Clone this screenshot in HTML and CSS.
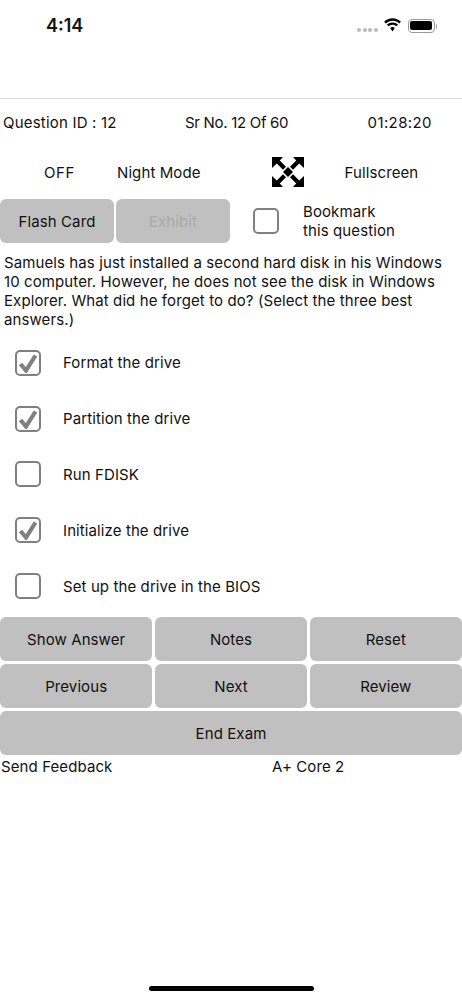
FILE: index.html
```html
<!DOCTYPE html>
<html lang="en">
<head>
  <meta charset="UTF-8" />
  <meta name="viewport" content="width=device-width, initial-scale=1.0" />
  <title>A+ Core 2 Exam</title>
  <link rel="stylesheet" href="styles.css">
</head>
<body>
  <div class="phone">
    <div class="status-bar">
      <span class="clock">4:14</span>
      <div class="status-icons">
        <div class="signal"><i></i><i></i><i></i><i></i></div>
        <svg class="wifi" width="19" height="14" viewBox="0 0 18 14">
          <path d="M9 2.800c2.600 0 5 1 6.700 2.700L17.400 3.800A11.800 11.800 0 0 0 9 .3 11.800 11.800 0 0 0 .6 3.800l1.700 1.700A9.600 9.600 0 0 1 9 2.800z"/>
          <path d="M9 6.800c1.500 0 2.900.6 3.900 1.500l1.700-1.700A8 8 0 0 0 9 4.400a8 8 0 0 0-5.600 2.200l1.700 1.700A5.800 5.800 0 0 1 9 6.800z"/>
          <path d="M9 9c-.9 0-1.700.3-2.300.9L9 13.500l2.300-3.600C10.700 9.300 9.900 9 9 9z"/>
        </svg>
        <div class="battery"><div class="battery-level"></div></div>
        <div class="battery-cap"></div>
      </div>
    </div>

    <div class="info-row">
      <span class="question-id">Question ID : 12</span>
      <span class="sr-no">Sr No. 12 Of 60</span>
      <span class="timer">01:28:20</span>
    </div>

    <div class="mode-row">
      <span class="mode-off">OFF</span>
      <span class="mode-label">Night Mode</span>
      <svg class="fullscreen" width="34" height="32" viewBox="0 0 34 32">
        <path d="M1 1h11L8.800 4.400 15 10.800 12 13.800 5.800 7.600 1 12z"/>
        <path d="M33 1H22L25.200 4.400 19 10.800 22 13.800 28.200 7.600 33 12z"/>
        <path d="M1 31h11L8.800 27.600 15 21.200 12 18.200 5.800 24.400 1 20z"/>
        <path d="M33 31H22L25.200 27.600 19 21.200 22 18.200 28.200 24.400 33 20z"/>
        <path d="M17 11l5 5-5 5-5-5z"/>
      </svg>
      <span class="mode-full">Fullscreen</span>
    </div>

    <div class="tools-row">
      <button class="btn tool-btn">Flash Card</button>
      <button class="btn tool-btn disabled">Exhibit</button>
      <span class="box bookmark-box"></span>
      <span class="bookmark-label">Bookmark<br>this question</span>
    </div>

    <p class="question">Samuels has just installed a second hard disk in his Windows 10 computer. However, he does not see the disk in Windows Explorer. What did he forget to do? (Select the three best answers.)</p>

    <ul class="options">
      <li><span class="box checked"><svg width="20" height="20" viewBox="0 0 20 20"><path d="M2.500 11l5.500 6.500L17.500 2.500"/></svg></span>Format the drive</li>
      <li><span class="box checked"><svg width="20" height="20" viewBox="0 0 20 20"><path d="M2.500 11l5.500 6.500L17.500 2.500"/></svg></span>Partition the drive</li>
      <li><span class="box"></span>Run FDISK</li>
      <li><span class="box checked"><svg width="20" height="20" viewBox="0 0 20 20"><path d="M2.500 11l5.500 6.500L17.500 2.500"/></svg></span>Initialize the drive</li>
      <li><span class="box"></span>Set up the drive in the BIOS</li>
    </ul>

    <div class="actions">
      <button class="btn">Show Answer</button>
      <button class="btn">Notes</button>
      <button class="btn">Reset</button>
      <button class="btn">Previous</button>
      <button class="btn">Next</button>
      <button class="btn">Review</button>
      <button class="btn end-exam">End Exam</button>
    </div>

    <div class="footer-row">
      <span class="feedback">Send Feedback</span>
      <span>A+ Core 2</span>
    </div>

    <div class="home-bar"></div>
  </div>
</body>
</html>
```

FILE: styles.css
```css
* {
  box-sizing: border-box;
}

body {
  margin: 0;
  font-family: 'Inter', sans-serif;
  background-color: #fff;
  color: #111;
  font-size: 15px;
  letter-spacing: 0.1px;
}

.phone {
  width: 462px;
  height: 1000px;
  display: flex;
  flex-direction: column;
  overflow: hidden;
}

.status-bar {
  height: 99px;
  border-bottom: 1px solid #dcdcdc;
  padding: 14px 25px 0 46px;
  display: flex;
  justify-content: space-between;
  align-items: flex-start;
}

.clock {
  font-size: 18px;
  font-weight: 600;
  line-height: 24px;
  letter-spacing: 0;
}

.status-icons {
  display: flex;
  align-items: center;
  height: 24px;
}

.signal {
  display: flex;
  gap: 1.500px;
  margin-right: 5px;
  margin-top: 8px;
}

.signal i {
  width: 4px;
  height: 4px;
  border-radius: 50%;
  background-color: #bbb;
}

.wifi {
  margin-right: 6px;
  margin-top: -2px;
  fill: #000;
}

.battery {
  width: 27px;
  height: 14px;
  margin-top: -1px;
  border: 1px solid #999;
  border-radius: 4px;
  padding: 1.500px;
}

.battery-level {
  height: 100%;
  background-color: #000;
  border-radius: 2px;
}

.battery-cap {
  width: 1.500px;
  height: 5px;
  margin-left: 1px;
  background-color: #aaa;
  border-radius: 0 2px 2px 0;
}

.info-row {
  height: 46px;
  padding: 0 30px 0 3px;
  display: flex;
  align-items: center;
  justify-content: space-between;
}

.question-id {
  letter-spacing: 0.2px;
}

.sr-no {
  letter-spacing: -0.3px;
  margin-right: 11px;
}

.timer {
  letter-spacing: 0.4px;
}

.mode-row {
  height: 54px;
  display: flex;
  align-items: center;
}

.mode-off {
  margin-left: 44px;
  letter-spacing: 0.6px;
}

.mode-label {
  margin-left: 42px;
}

.fullscreen {
  margin-left: 70px;
  fill: #000;
}

.mode-full {
  margin-left: 40px;
}

.tools-row {
  height: 44px;
  display: flex;
  align-items: center;
}

.btn {
  font-family: inherit;
  font-size: 15px;
  letter-spacing: 0.1px;
  color: #111;
  background-color: #c0c0c0;
  border: none;
  border-radius: 6px;
  padding: 0;
  height: 44px;
}

.tool-btn {
  width: 114px;
  margin-right: 2px;
}

.disabled {
  color: #a9a9a9;
}

.box {
  width: 26px;
  height: 26px;
  flex-shrink: 0;
  border: 2px solid #808080;
  border-radius: 5px;
  display: flex;
  align-items: center;
  justify-content: center;
}

.checked svg {
  fill: none;
  stroke: #808080;
  stroke-width: 4.200;
}

.bookmark-box {
  margin-left: 21px;
}

.bookmark-label {
  margin-left: 24px;
  line-height: 19px;
}

.question {
  margin: 10px 0 0;
  padding: 0 4px;
  line-height: 19px;
  letter-spacing: 0.1px;
}

.options {
  list-style: none;
  margin: 6px 0 0;
  padding: 0;
}

.options li {
  height: 55.800px;
  display: flex;
  align-items: center;
  padding-left: 15px;
}

.options .box {
  margin-right: 22px;
}

.actions {
  margin-top: 3px;
  display: grid;
  grid-template-columns: repeat(3, 1fr);
  gap: 3px 2.500px;
}

.actions .btn {
  padding-top: 2px;
}

.end-exam {
  grid-column: span 3;
}

.footer-row {
  display: flex;
  height: 24px;
  align-items: center;
}

.feedback {
  width: 272px;
  padding-left: 1px;
}

.home-bar {
  width: 165px;
  height: 5px;
  margin: 207px auto 0;
  background-color: #000;
  border-radius: 3px;
}
```
